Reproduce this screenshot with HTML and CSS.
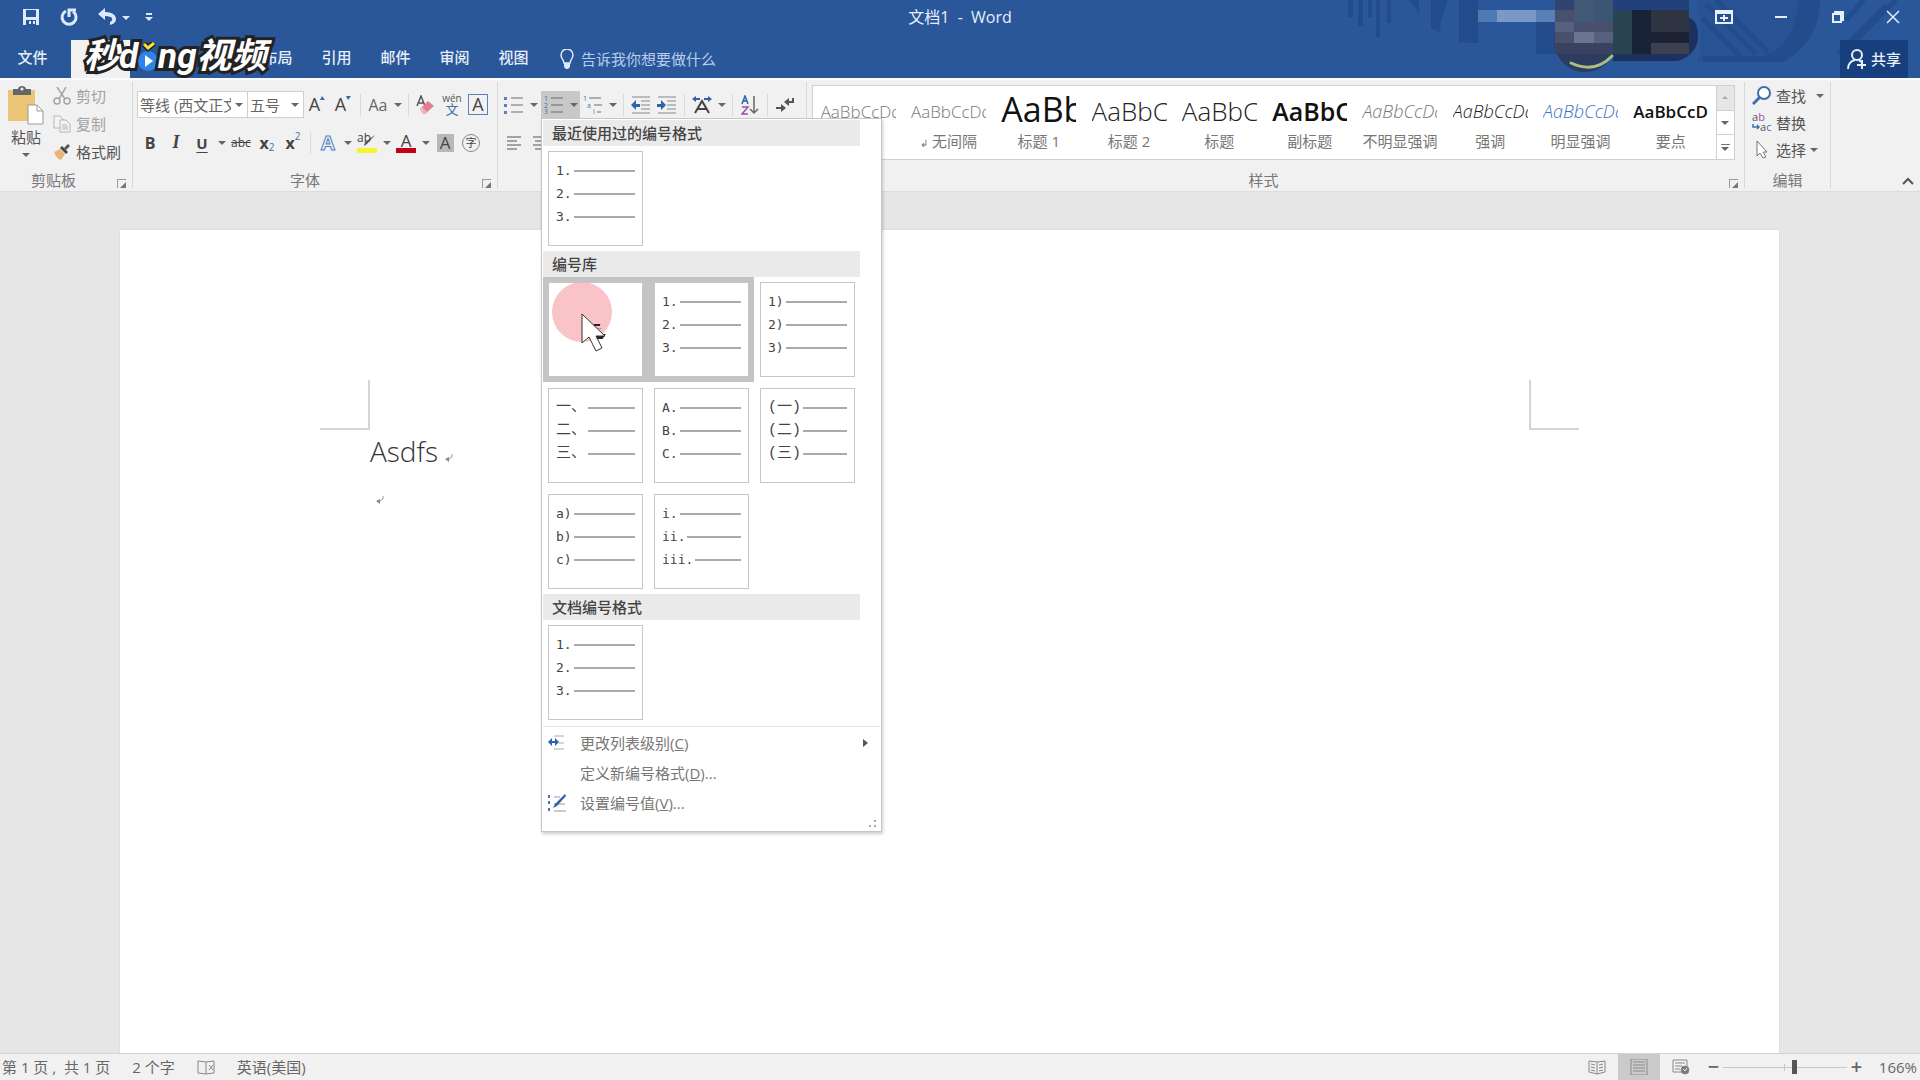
FILE: index.html
```html
<!doctype html>
<html lang="zh-CN">
<head>
	<meta charset="UTF-8">
	<meta name="viewport" content="width=device-width">
	<title>文档1 - Word</title>
	<link rel="stylesheet" href="styles.css">
</head>
<body>

<header class="header">
	<svg class="decor" width="580" height="78" viewBox="0 0 580 78" aria-hidden="true">
		<g fill="#234c8c">
			<path d="M8 0h5v17H8zM18 0h5v26h-5zM28 0h4v17h-4zM36 0h4v37h-4zM47 0h4v23h-4zM69 0h10v14zM91 0h17l-7 22 -1 11 -9 -5zM119 0h19v43h-19zM196 22h19v32h-19z"/>
			<path d="M358 62C362 35 362 20 356 0h120c0 30-12 50-34 62z" opacity=".35"/>
			<path d="M458 0h22c0 30-15 50-37 62h-80v-6h60c22-6 35-28 35-56z"/>
			<path d="M362 18l38 38M366 4l50 50M376 0l52 52" stroke="#234c8c" stroke-width="5"/>
			<path d="M512 44L556 0M498 54L546 6M506 20L524 0" stroke="#234c8c" stroke-width="5"/>
		</g>
		<path d="M138 10h19v12h-19z" fill="#5078b3"/>
		<path d="M157 10h39v12h-39z" fill="#7c98c6"/>
		<path d="M196 10h19v12h-19z" fill="#5a80b8"/>
		<path d="M273 18h77q8 4 8 18 0 18-20 25h-65z" fill="#1d315f"/>
		<circle cx="245" cy="41" r="31" fill="#2c3c5e"/>
		<path d="M215 0h58v54h-58z" fill="#48506e"/>
		<path d="M215 0h19v10h-19z" fill="#30446f"/>
		<path d="M234 0h20v22h-20z" fill="#425a78"/>
		<path d="M254 0h19v22h-19z" fill="#3a5672"/>
		<path d="M215 22h19v10h-19zM254 32h19v11h-19z" fill="#57607e"/>
		<path d="M234 32h20v11h-20z" fill="#6b7591"/>
		<path d="M215 43h58v11h-58z" fill="#3a4262"/>
		<path d="M273 0h76v10h-76z" fill="#21407c"/>
		<path d="M273 10h19v44h-19z" fill="#2a4350"/>
		<path d="M292 10h19v44h-19z" fill="#192338"/>
		<path d="M311 10h38v22h-38z" fill="#2f3443"/>
		<path d="M311 32h38v11h-38z" fill="#1c2233"/>
		<path d="M311 43h38v11h-38z" fill="#3b414e"/>
		<path d="M231 63q24 11 41-7" fill="none" stroke="#a9bf83" stroke-width="3" stroke-linecap="round"/>
	</svg>

	<div class="titlebar">
		<div class="quick">
			<button class="wbtn" aria-label="保存"><svg width="18" height="18" viewBox="0 0 18 18"><path d="M1 1h16v16H1z" fill="#dcebfb"/><path d="M4 2h10v7H4zM4 12h10v5H4z" fill="#2a579a"/><path d="M7 13h2v3H7zM11 13h2v3h-2z" fill="#dcebfb"/></svg></button>
			<button class="wbtn" aria-label="重复"><svg width="20" height="20" viewBox="0 0 20 20" fill="none" stroke="#dcebfb" stroke-width="3"><path d="M7 4a7 7 0 1 0 7 0.500"/><path d="M10 10V3h7" stroke-width="3"/></svg></button>
			<button class="wbtn" aria-label="撤消"><svg width="20" height="18" viewBox="0 0 20 18"><path d="M8 0v4c7 0 11 3 11 7 0 3-2 5-6 6v-3c4-2 3-6-5-6v4L1 6z" fill="#dcebfb"/></svg></button>
			<button class="wcaret" aria-label="撤消列表"><span class="caret"></span></button>
			<button class="wcaret custom" aria-label="自定义快速访问工具栏"><i></i><span class="caret"></span></button>
		</div>
		<div class="doc-title">文档1&nbsp; -&nbsp; Word</div>
		<div class="window-btns">
			<button aria-label="功能区显示选项"><svg width="18" height="14" viewBox="0 0 18 14"><path d="M1 1h16v12H1z" fill="none" stroke="#e6effa" stroke-width="2"/><path d="M1 3h16M9 5v6M5 8h8" stroke="#e6effa" stroke-width="2"/></svg></button>
			<button aria-label="最小化"><svg width="14" height="14" viewBox="0 0 14 14"><path d="M1 7h12" stroke="#e6effa" stroke-width="2"/></svg></button>
			<button aria-label="还原"><svg width="14" height="14" viewBox="0 0 14 14" fill="none" stroke="#e6effa" stroke-width="2"><path d="M2 4h8v8H2zM4 3V2h8v8h-1"/></svg></button>
			<button aria-label="关闭"><svg width="14" height="14" viewBox="0 0 14 14"><path d="M1 1l12 12M13 1L1 13" stroke="#e6effa" stroke-width="1.500"/></svg></button>
		</div>
	</div>

	<nav class="tabs">
		<a href="#" class="tab file">文件</a>
		<a href="#" class="tab active" aria-label="开始"></a>
		<a href="#" class="tab" aria-label="插入"></a>
		<a href="#" class="tab" aria-label="设计"></a>
		<a href="#" class="tab">布局</a>
		<a href="#" class="tab">引用</a>
		<a href="#" class="tab">邮件</a>
		<a href="#" class="tab">审阅</a>
		<a href="#" class="tab">视图</a>
		<button class="tell">
			<svg width="14" height="20" viewBox="0 0 14 20"><path d="M4 14c0-3-3-4-3-8a6 6 0 0 1 12 0c0 4-3 5-3 8z" fill="none" stroke="#dcebfb" stroke-width="1.500"/><path d="M4 14h6v4l-2 2H6l-2-2z" fill="#dcebfb"/></svg>
			告诉我你想要做什么
		</button>
		<button class="share">
			<svg width="20" height="22" viewBox="0 0 20 22" fill="none" stroke="#e6effa" stroke-width="2"><circle cx="10" cy="7" r="5"/><path d="M1 21c0-5 3-8 7-9M12 12l2 2M10 17h9M15 12v9"/></svg>
			共享
		</button>
	</nav>

	<div class="watermark">
		<span>秒d</span>
		<svg width="20" height="30" viewBox="0 0 20 30"><circle cx="10" cy="19" r="10" fill="#2e84ea"/><path d="M7 13l8 6-8 6z" fill="#fff"/><path d="M6 2l4 4 6-5" fill="none" stroke="#222" stroke-width="6"/><path d="M6 2l4 4 6-5" fill="none" stroke="#f6e336" stroke-width="3"/></svg>
		<span>ng视频</span>
	</div>
</header>

<div class="ribbon">
	<section class="group clipboard">
		<div class="clip-body">
			<button class="paste">
				<svg width="36" height="39" viewBox="0 0 36 39"><path d="M0 4h27v31H0z" fill="#ecc577"/><path d="M5 3h5c0-4 8-4 8 0h5v6H5z" fill="#666"/><circle cx="14" cy="3" r="1.500" fill="#f1f1f1"/><path d="M20 19h9l6 6v13H20z" fill="#fff" stroke="#999"/><path d="M29 19v6h6" fill="none" stroke="#999"/></svg>
				粘贴
				<span class="caret"></span>
			</button>
			<div class="clip-list">
				<button class="text-btn off"><svg width="18" height="18" viewBox="0 0 18 18" fill="none" stroke="#a5a5a5" stroke-width="1.500"><path d="M4 0l8 12M13 0L6 12"/><circle cx="4" cy="14" r="3"/><circle cx="14" cy="14" r="3"/></svg>剪切</button>
				<button class="text-btn off"><svg width="18" height="18" viewBox="0 0 18 18" fill="#f4f4f4" stroke="#b5b5b5"><path d="M1 1h6l3 3v9H1z"/><path d="M7 5h6l4 4v8H7zM9 10h5M9 12h6M9 14h6"/></svg>复制</button>
				<button class="text-btn"><svg width="18" height="18" viewBox="0 0 18 18"><path d="M1 9l6-3 5 5-4 6C5 16 2 13 1 9z" fill="#eab676"/><path d="M7 5l2-2 6 6-2 2z" fill="#444"/><path d="M11 5l4-4 2 2-4 4z" fill="#555"/></svg>格式刷</button>
			</div>
		</div>
		<div class="label">剪贴板<button class="launcher" aria-label="剪贴板设置"></button></div>
	</section>

	<section class="group font">
		<div class="row">
			<label class="combo name"><select aria-label="字体"><option>等线 (西文正文)</option></select></label>
			<label class="combo size"><select aria-label="字号"><option>五号</option></select></label>
			<button class="ib grow" aria-label="增大字号">A<svg width="5" height="4" viewBox="0 0 5 4"><path d="M0 4l2-4 3 4z" fill="#3b66a5"/></svg></button>
			<button class="ib grow" aria-label="减小字号">A<svg width="5" height="4" viewBox="0 0 5 4"><path d="M0 0h5L2 4z" fill="#3b66a5"/></svg></button>
			<i class="sep"></i>
			<button class="ib aa">Aa</button><button class="cb" aria-label="更改大小写"><span class="caret"></span></button>
			<i class="sep"></i>
			<button class="ib" aria-label="清除格式"><svg width="20" height="20" viewBox="0 0 20 20"><path d="M1 11l4-10 4 10M2 8h6" fill="none" stroke="#555" stroke-width="1.500"/><path d="M4 14l8-8 6 5-9 8H7z" fill="#e27d93"/><path d="M4 14l2-2 5 5-2 2H7z" fill="#f0b5c2"/></svg></button>
			<button class="ib pinyin" aria-label="拼音指南"><small>wén</small><span>文</span></button>
			<button class="ib" aria-label="字符边框"><span class="boxed">A</span></button>
		</div>
		<div class="row">
			<button class="ib bold">B</button>
			<button class="ib ital">I</button>
			<button class="ib under">U</button><button class="cb" aria-label="下划线样式"><span class="caret"></span></button>
			<button class="ib strike">abc</button>
			<button class="ib bold">x<sub>2</sub></button>
			<button class="ib bold">x<sup>2</sup></button>
			<i class="sep"></i>
			<button class="ib effect">A</button><button class="cb" aria-label="文本效果"><span class="caret"></span></button>
			<button class="ib" aria-label="突出显示颜色"><svg width="20" height="20" viewBox="0 0 20 20"><text x="0" y="9" font-size="12" fill="#444">ab</text><path d="M18 2l-8 9-3 2 1-4z" fill="#555"/><path d="M0 15h20v5H0z" fill="#f4f52a"/></svg></button><button class="cb" aria-label="颜色列表"><span class="caret"></span></button>
			<button class="ib fcolor">A</button><button class="cb" aria-label="字体颜色列表"><span class="caret"></span></button>
			<button class="ib" aria-label="字符底纹"><span class="shade">A</span></button>
			<button class="ib" aria-label="带圈字符"><span class="circled">字</span></button>
		</div>
		<div class="label">字体<button class="launcher" aria-label="字体设置"></button></div>
	</section>

	<section class="group para">
		<div class="row">
			<button class="ib" aria-label="项目符号"><svg width="20" height="18" viewBox="0 0 20 18"><path d="M0 1h3v3H0zM0 8h3v3H0zM0 15h3v3H0z" fill="#5b82b8"/><path d="M7 2h12M7 9h12M7 16h12" stroke="#999" stroke-width="1.500"/></svg></button><button class="cb" aria-label="项目符号列表"><span class="caret"></span></button>
			<div class="numbering">
				<button class="ib" aria-label="编号"><svg width="20" height="18" viewBox="0 0 20 18"><g font-size="7" fill="#4472ad"><text y="5">1</text><text y="12">2</text><text y="18">3</text></g><path d="M7 2h12M7 9h12M7 16h12" stroke="#888" stroke-width="1.500"/></svg></button><button class="cb" aria-label="编号列表"><span class="caret"></span></button>

				<div class="menu">
					<h2>最近使用过的编号格式</h2>
					<div class="cells">
						<button class="cell"><span class="card"><span>1.</span><span>2.</span><span>3.</span></span></button>
					</div>
					<h2>编号库</h2>
					<div class="cells">
						<button class="cell on"><span class="card none">无</span></button>
						<button class="cell on"><span class="card"><span>1.</span><span>2.</span><span>3.</span></span></button>
						<button class="cell"><span class="card"><span>1)</span><span>2)</span><span>3)</span></span></button>
						<button class="cell"><span class="card cjk"><span>一、</span><span>二、</span><span>三、</span></span></button>
						<button class="cell"><span class="card"><span>A.</span><span>B.</span><span>C.</span></span></button>
						<button class="cell"><span class="card cjk"><span>(一)</span><span>(二)</span><span>(三)</span></span></button>
						<button class="cell"><span class="card"><span>a)</span><span>b)</span><span>c)</span></span></button>
						<button class="cell"><span class="card"><span>i.</span><span>ii.</span><span>iii.</span></span></button>
					</div>
					<h2>文档编号格式</h2>
					<div class="cells">
						<button class="cell"><span class="card"><span>1.</span><span>2.</span><span>3.</span></span></button>
					</div>
					<div class="actions">
						<button><svg width="18" height="16" viewBox="0 0 18 16"><path d="M6 1h10M11 8h5M6 14h10" stroke="#aaa"/><path d="M0 7l4-4v3h3V3l4 4-4 4V8H4v3z" fill="#2f62a8"/></svg>更改列表级别(<u>C</u>)<i class="more"></i></button>
						<button><svg width="18" height="16"></svg>定义新编号格式(<u>D</u>)...</button>
						<button><svg width="18" height="18" viewBox="0 0 18 18"><path d="M0 1h2v3H0zM0 7h2v3H0zM0 14h2v3H0z" fill="#4472ad"/><path d="M6 3h6M6 10h11M6 17h12" stroke="#999"/><path d="M17 0l1 2L9 12l-4 2 2-4z" fill="#2f62a8"/></svg>设置编号值(<u>V</u>)...</button>
					</div>
					<svg class="grip" width="9" height="8" viewBox="0 0 9 8"><path d="M6 0h2v2H6zM6 5h2v2H6zM1 5h2v2H1z" fill="#aaa"/></svg>
					<svg class="pointer" width="62" height="74" viewBox="0 0 62 74"><circle cx="30" cy="30" r="30" fill="#f6a9b0" opacity=".7"/><path d="M42 43h6M43 53h9l-2 3h-7z" stroke="#222" stroke-width="2" fill="#222"/><path d="M30 32v29l7-6 7 14 6-3-6-12h9z" fill="#fff" stroke="#333"/></svg>
				</div>
			</div>
			<button class="ib" aria-label="多级列表"><svg width="20" height="18" viewBox="0 0 20 18"><g font-size="7" fill="#4472ad"><text y="5">1</text><text x="4" y="12">a</text><text x="10" y="18">i</text></g><path d="M6 2h12M11 9h8M14 16h4" stroke="#999" stroke-width="1.500"/></svg></button><button class="cb" aria-label="多级列表选项"><span class="caret"></span></button>
			<i class="sep"></i>
			<button class="ib" aria-label="减少缩进量"><svg width="20" height="18" viewBox="0 0 20 18"><path d="M1 1h18M10 5h9M10 9h9M10 13h9M1 17h18" stroke="#aaa" stroke-width="1.500"/><path d="M0 9l5-5v4h4v3H5v3z" fill="#2f62a8"/></svg></button>
			<button class="ib" aria-label="增加缩进量"><svg width="20" height="18" viewBox="0 0 20 18"><path d="M1 1h18M10 5h9M10 9h9M10 13h9M1 17h18" stroke="#aaa" stroke-width="1.500"/><path d="M9 9L4 4v4H0v3h4v3z" fill="#2f62a8"/></svg></button>
			<i class="sep"></i>
			<button class="ib" aria-label="中文版式"><svg width="20" height="18" viewBox="0 0 20 18"><path d="M3 17L10 5l7 12M6 13h8" fill="none" stroke="#444" stroke-width="2"/><path d="M0 3l4-3v2h4v2H4v2zM20 3l-4-3v2h-4v2h4v2z" fill="#2f62a8"/></svg></button><button class="cb" aria-label="中文版式选项"><span class="caret"></span></button>
			<i class="sep"></i>
			<button class="ib" aria-label="排序"><svg width="18" height="20" viewBox="0 0 18 20" fill="none" stroke-width="1.500"><path d="M1 9l3-8 3 8M2 6h4" stroke="#2f62a8"/><path d="M1 12h6l-6 7h6" stroke="#9a4fb0"/><path d="M13 1v17M9 14l4 4 4-4" stroke="#666"/></svg></button>
			<i class="sep"></i>
			<button class="ib" aria-label="显示编辑标记"><svg width="18" height="16" viewBox="0 0 18 16"><path d="M17 1v4h-5" fill="none" stroke="#555" stroke-width="2"/><path d="M13 1v8L8 5zM5 7v8l5-4z" fill="#555"/><path d="M0 11h6" stroke="#555" stroke-width="2"/></svg></button>
		</div>
		<div class="row">
			<button class="ib" aria-label="左对齐"><svg width="14" height="14" viewBox="0 0 14 14"><path d="M0 1h14M0 5h10M0 9h14M0 13h10" stroke="#888" stroke-width="1.500"/></svg></button>
			<button class="ib" aria-label="居中"><svg width="14" height="14" viewBox="0 0 14 14"><path d="M0 1h14M2 5h10M0 9h14M2 13h10" stroke="#888" stroke-width="1.500"/></svg></button>
		</div>
	</section>

	<section class="group styles">
		<div class="gallery">
			<button class="style"><b>AaBbCcDd</b></button>
			<button class="style"><b>AaBbCcDd</b><span><small>↲</small> 无间隔</span></button>
			<button class="style h1"><b>AaBb</b><span>标题 1</span></button>
			<button class="style h2"><b>AaBbC</b><span>标题 2</span></button>
			<button class="style h2"><b>AaBbC</b><span>标题</span></button>
			<button class="style h2 strong"><b>AaBbC</b><span>副标题</span></button>
			<button class="style it"><b>AaBbCcDd</b><span>不明显强调</span></button>
			<button class="style it dark"><b>AaBbCcDd</b><span>强调</span></button>
			<button class="style it blue"><b>AaBbCcDd</b><span>明显强调</span></button>
			<button class="style strong"><b>AaBbCcD</b><span>要点</span></button>
			<div class="scroller">
				<button aria-label="向上" disabled><span class="caret up"></span></button>
				<button aria-label="向下"><span class="caret"></span></button>
				<button aria-label="更多"><i></i><span class="caret"></span></button>
			</div>
		</div>
		<div class="label">样式<button class="launcher" aria-label="样式设置"></button></div>
	</section>

	<section class="group edit">
		<div class="edit-list">
			<button class="text-btn"><svg width="20" height="19" viewBox="0 0 20 19" fill="none" stroke="#3f6fae"><circle cx="12" cy="7" r="6" stroke-width="2" fill="#fff"/><path d="M8 11l-7 7" stroke-width="3"/></svg>查找<span class="caret wide"></span></button>
			<button class="text-btn"><svg width="20" height="19" viewBox="0 0 20 19"><text x="0" y="8" font-size="11" fill="#555">a<tspan fill="#9a4fb0">b</tspan></text><text x="8" y="18" font-size="11" fill="#555">a<tspan fill="#3f6fae">c</tspan></text><path d="M1 11v3h6M5 12l2 2-2 2" fill="none" stroke="#3f6fae" stroke-width="1.500"/></svg>替换</button>
			<button class="text-btn"><svg width="20" height="19" viewBox="0 0 20 19"><path d="M5 1v15l3-3 3 5 3-1-3-5h4z" fill="#fff" stroke="#777"/></svg>选择<span class="caret"></span></button>
		</div>
		<div class="label">编辑</div>
	</section>

	<button class="collapse" aria-label="折叠功能区"><svg width="12" height="8" viewBox="0 0 12 8"><path d="M1 7l5-5 5 5" fill="none" stroke="#555" stroke-width="2"/></svg></button>
</div>

<main class="workspace">
	<article class="page">
		<div class="marks"><i class="mark left"></i><i class="mark right"></i></div>
		<p>Asdfs <svg width="8" height="8" viewBox="0 0 8 8"><path d="M7 0v3L3 6" fill="none" stroke="#999"/><path d="M0 5l4-2v5z" fill="#888"/></svg></p>
		<p class="empty"><svg width="8" height="8" viewBox="0 0 8 8"><path d="M7 0v3L3 6" fill="none" stroke="#999"/><path d="M0 5l4-2v5z" fill="#888"/></svg></p>
	</article>
</main>

<footer class="status">
	<span>第 1 页 ,&nbsp; 共 1 页</span>
	<span>2 个字</span>
	<svg width="18" height="15" viewBox="0 0 18 15" fill="none" stroke="#888"><path d="M9 2v12M9 2L1 1v12l8 1M9 2l8-1v12l-8 1M12 5l4 5M16 5l-4 5"/></svg>
	<span>英语(美国)</span>
	<div class="views">
		<button aria-label="阅读视图"><svg width="18" height="15" viewBox="0 0 18 15" fill="none" stroke="#888"><path d="M9 2v12M9 2L1 1v11l8 2 8-2V1zM3 4l4 1M3 7l4 1M3 10l4 1M15 4l-4 1M15 7l-4 1M15 10l-4 1"/></svg></button>
		<button class="on" aria-label="页面视图"><svg width="18" height="16" viewBox="0 0 18 16" fill="none" stroke="#8c8c8c"><path d="M1 0h16v16H1zM3 3h12M3 6h12M3 9h12M3 12h12"/></svg></button>
		<button aria-label="Web 版式视图"><svg width="18" height="16" viewBox="0 0 18 16" fill="none" stroke="#888"><path d="M1 1h14v6M1 1v12h8M3 4h10M3 7h7M3 10h5"/><circle cx="13" cy="11" r="4" fill="#777"/><path d="M11 10l2 2 2-3" stroke="#eee"/></svg></button>
	</div>
	<div class="zoom-box">
		<button aria-label="缩小">−</button>
		<input class="zoom" type="range" min="10" max="280" value="166" aria-label="显示比例">
		<button aria-label="放大">+</button>
	</div>
	<span class="percent">166%</span>
</footer>

</body>
</html>
```
FILE: styles.css
```css
* {
	box-sizing: border-box;
}
body {
	margin: 0;
	min-height: 100vh;
	display: flex;
	flex-direction: column;
	background: #e6e6e6;
	color: #555;
	font: 15px/20px "Open Sans", "Noto Sans CJK SC", sans-serif;
}
button {
	margin: 0;
	padding: 0;
	border: 0;
	background: none;
	color: inherit;
	font: inherit;
}
svg {
	flex: none;
}

/* header */
.header {
	position: relative;
	background: #2a579a;
	color: #e6effa;
	height: 78px;
}
.decor {
	position: absolute;
	right: 0;
	top: 0;
}
.titlebar {
	position: relative;
	display: grid;
	grid-template-columns: 1fr auto 1fr;
	height: 40px;
	padding-bottom: 7px;
	align-items: center;
}
.quick {
	display: flex;
	align-items: center;
	padding-left: 12px;
}
.wbtn {
	display: flex;
	justify-content: center;
	width: 38px;
}
.wbtn + .wcaret {
	margin-left: -4px;
}
.wcaret {
	width: 8px;
	margin-right: 15px;
}
.wcaret .caret {
	border-top-color: #dcebfb;
}
.custom i {
	display: block;
	width: 6px;
	height: 2px;
	margin: 0 1px 2px;
	background: #dcebfb;
}
.custom .caret {
	display: block;
}
.doc-title {
	font-size: 16px;
	line-height: 20px;
}
.window-btns {
	display: flex;
	justify-content: flex-end;
}
.window-btns button {
	width: 57px;
	line-height: 0;
}
.window-btns button:last-child {
	width: 54px;
}
.caret {
	display: inline-block;
	width: 0;
	border: 4px solid transparent;
	border-top-color: #666;
	border-bottom: 0;
	vertical-align: middle;
}
.caret.up {
	border: 3px solid transparent;
	border-bottom-color: #aaa;
	border-top: 0;
}
.tabs {
	position: relative;
	display: flex;
	height: 38px;
}
.tab {
	width: 59px;
	color: inherit;
	font-size: 15px;
	font-weight: 500;
	line-height: 35px;
	text-align: center;
	text-decoration: none;
}
.tab.file {
	width: 71px;
	padding-right: 6px;
}
.tab.active {
	background: #f1f1f1;
}
.tell {
	display: flex;
	align-items: center;
	gap: 7px;
	margin-left: 17px;
	color: #b9cdea;
}
.share {
	display: flex;
	align-items: center;
	justify-content: center;
	gap: 4px;
	width: 68px;
	margin: 0 12px 0 auto;
	background: #173f7d;
	font-weight: 500;
}
.watermark {
	position: absolute;
	z-index: 5;
	left: 84px;
	top: 35px;
	display: flex;
	align-items: center;
	color: #fff;
	font: italic bold 35px/44px Roboto, "Noto Sans CJK SC", sans-serif;
	-webkit-text-stroke: 6px #222;
	paint-order: stroke fill;
}

/* ribbon */
.ribbon {
	position: relative;
	z-index: 2;
	display: flex;
	height: 114px;
	background: #f1f1f1;
	border-top: 2px solid #f9fbfe;
	border-bottom: 1px solid #dcdcdc;
}
.group {
	position: relative;
	flex: none;
	display: flex;
	flex-direction: column;
	gap: 11px;
	margin: 2px 0 3px;
	padding-top: 9px;
	border-right: 1px solid #d8d8d8;
}
.label {
	position: relative;
	margin-top: auto;
	line-height: 16px;
	text-align: center;
	color: #777;
}
.launcher {
	position: absolute;
	right: 6px;
	bottom: 0;
	width: 9px;
	height: 9px;
	border: 1px solid #999;
	border-width: 1px 0 0 1px;
}
.launcher::after {
	content: "";
	position: absolute;
	right: 0;
	bottom: 0;
	border: 3px solid #777;
	border-left-color: transparent;
	border-top-color: transparent;
}
.row {
	display: flex;
	align-items: center;
	height: 27px;
}
.ib {
	display: flex;
	align-items: center;
	justify-content: center;
	width: 26px;
	height: 27px;
	color: #444;
}
.cb {
	width: 13px;
	height: 27px;
	line-height: 0;
}
.sep {
	width: 1px;
	height: 22px;
	margin: 0 4px;
	background: #dadada;
}
.clipboard {
	width: 133px;
	padding: 0;
	gap: 0;
}
.clipboard .label {
	padding-right: 25px;
}
.clip-body {
	display: flex;
	gap: 9px;
	padding-left: 8px;
}
.paste {
	display: flex;
	flex-direction: column;
	align-items: center;
	width: 36px;
	padding-top: 4px;
	line-height: 24px;
}
.paste .caret {
	margin-top: 4px;
}
.clip-list {
	display: flex;
	flex-direction: column;
}
.text-btn {
	display: flex;
	align-items: center;
	gap: 5px;
	height: 28px;
	color: #555;
}
.text-btn.off {
	color: #a2a2a2;
}
.font {
	width: 365px;
	padding-left: 4px;
}
.font .label {
	padding-right: 24px;
}
.combo {
	position: relative;
	height: 27px;
	border: 1px solid #d0d0d0;
	background: #fff;
}
.combo.name {
	width: 111px;
}
.combo.size {
	width: 56px;
	border-left: 0;
}
.combo select {
	appearance: none;
	width: 100%;
	height: 25px;
	padding: 0 16px 0 2px;
	border: 0;
	background: none;
	color: #666;
	font: inherit;
}
.combo::after {
	content: "";
	position: absolute;
	right: 4px;
	top: 11px;
	border: 4px solid transparent;
	border-top-color: #666;
	border-bottom: 0;
}
.grow {
	align-items: flex-start;
	font-size: 18px;
	line-height: 26px;
}
.grow svg {
	margin-top: 5px;
}
.aa {
	font-size: 16px;
	color: #666;
}
.pinyin {
	flex-direction: column;
	font-size: 13px;
	line-height: 13px;
	color: #3f6fae;
}
.pinyin small {
	font-size: 10px;
	line-height: 9px;
	color: #555;
}
.boxed {
	width: 20px;
	border: 1px solid #5b82b8;
	font-size: 18px;
	line-height: 19px;
}
.bold {
	font-weight: bold;
	font-size: 16px;
}
.bold sub,
.bold sup {
	font-size: 10px;
	font-weight: normal;
	color: #3f6fae;
	line-height: 10px;
}
.bold sub {
	align-self: flex-end;
	padding-bottom: 4px;
}
.bold sup {
	align-self: flex-start;
	padding-top: 2px;
}
.ital {
	font: italic bold 18px "Liberation Serif", serif;
}
.under {
	font-weight: bold;
	text-decoration: underline;
	text-underline-offset: 3px;
}
.strike {
	font-size: 12px;
	text-decoration: line-through;
}
.effect {
	color: #f1f1f1;
	font-size: 20px;
	font-weight: bold;
	-webkit-text-stroke: 1px #4a7fc4;
}
.fcolor {
	height: 20px;
	width: 20px;
	margin: 0 3px;
	border-bottom: 5px solid #c40018;
	font-size: 17px;
	line-height: 15px;
}
.shade {
	width: 17px;
	background: #b8b8b8;
	font-size: 17px;
	line-height: 18px;
}
.circled {
	width: 18px;
	border: 1px solid #888;
	border-radius: 50%;
	font-size: 11px;
	line-height: 16px;
}
.para {
	width: 309px;
	padding-left: 3px;
}
.numbering {
	position: relative;
	display: flex;
	margin-left: 1px;
	background: #c8c8c8;
}
.styles {
	flex: 1;
	min-width: 0;
	padding: 3px 9px 0 5px;
}
.gallery {
	display: flex;
	height: 75px;
	border: 1px solid #d0d0d0;
	background: #fff;
}
.style {
	flex: 1 1 0;
	min-width: 0;
	display: flex;
	flex-direction: column;
	align-items: center;
	color: #777;
	line-height: 18px;
}
.style small {
	font-size: 10px;
}
.style b {
	width: 75px;
	height: 46px;
	overflow: hidden;
	font-size: 17px;
	font-weight: 300;
	line-height: 51px;
	text-align: left;
	white-space: nowrap;
}
.h1 b {
	color: #111;
	font-size: 34px;
	font-weight: 400;
	line-height: 46px;
}
.h2 b {
	color: #222;
	font-size: 26px;
	line-height: 50px;
}
.style.strong b {
	color: #111;
	font-weight: 600;
}
.h2.strong b {
	font-size: 25px;
}
.it b {
	font-style: italic;
	font-size: 18px;
}
.dark b {
	color: #222;
}
.blue b {
	color: #4472c4;
}
.scroller {
	flex: none;
	width: 18px;
	display: flex;
	flex-direction: column;
	border-left: 1px solid #d0d0d0;
}
.scroller button {
	flex: 1;
	display: flex;
	flex-direction: column;
	align-items: center;
	justify-content: center;
	gap: 2px;
}
.scroller button + button {
	border-top: 1px solid #d0d0d0;
}
.scroller button:disabled {
	background: #e6e6e6;
}
.scroller i {
	width: 9px;
	height: 1px;
	background: #777;
}
.styles .label {
	padding-right: 20px;
}
.styles .launcher {
	right: -3px;
}
.edit {
	width: 86px;
	padding: 0;
	gap: 0;
}
.edit-list {
	padding: 0 0 0 7px;
}
.edit-list .text-btn {
	height: 27px;
	gap: 4px;
}
.caret.wide {
	margin-left: 6px;
}
.collapse {
	width: 89px;
	padding: 0 6px 6px 0;
	align-self: flex-end;
	text-align: right;
	line-height: 0;
}

/* numbering menu */
.menu {
	position: absolute;
	z-index: 10;
	left: 0;
	top: 100%;
	width: 341px;
	padding: 1px 1px 13px;
	border: 1px solid #c6c6c6;
	background: #fff;
	box-shadow: 1px 2px 3px rgba(0, 0, 0, .2);
}
.menu h2 {
	width: 317px;
	margin: 0;
	padding-left: 9px;
	background: #eaeaea;
	color: #444;
	font-size: 15px;
	font-weight: 500;
	line-height: 26px;
}
.cells {
	display: grid;
	grid-template-columns: repeat(3, 105px);
	gap: 1px;
}
.cell {
	height: 105px;
	padding: 5px;
}
.cell.on {
	background: #c4c4c4;
}
.cell.on + .cell.on {
	box-shadow: -1px 0 #c4c4c4;
}
.card {
	display: flex;
	flex-direction: column;
	height: 95px;
	padding: 7px;
	border: 1px solid #c6c6c6;
	background: #fff;
	color: #444;
	font: 13px/23px "DejaVu Sans Mono", "Noto Sans CJK SC", monospace;
}
.card.cjk {
	font-family: "Liberation Mono", "Noto Sans CJK SC", monospace;
	font-size: 15px;
}
.card.none {
	align-items: center;
	justify-content: center;
}
.card span {
	display: flex;
	align-items: center;
	gap: 2px;
}
.card span::after {
	content: "";
	flex: 1;
	height: 2px;
	background: #aaa;
}
.actions {
	margin-top: 1px;
	padding-top: 1px;
	border-top: 1px solid #e4e4e4;
}
.actions button {
	display: flex;
	align-items: center;
	width: 100%;
	height: 30px;
	padding: 0 12px 0 5px;
	color: #777;
}
.actions svg {
	margin-right: 14px;
}
.more {
	margin-left: auto;
	border: 4px solid transparent;
	border-left: 5px solid #555;
	border-right: 0;
}
.grip {
	position: absolute;
	right: 4px;
	bottom: 3px;
}
.pointer {
	position: absolute;
	left: 10px;
	top: 163px;
}

/* document */
.workspace {
	flex: 1;
	display: flex;
	padding: 38px 141px 0 120px;
}
.page {
	flex: 1;
	padding: 150px 200px 0;
	background: #fff;
	box-shadow: 0 0 1px #bbb;
}
.marks {
	display: flex;
	justify-content: space-between;
}
.mark {
	width: 50px;
	height: 50px;
	border-bottom: 2px solid #d4d4d4;
}
.mark.left {
	border-right: 2px solid #d4d4d4;
}
.mark.right {
	border-left: 2px solid #d4d4d4;
}
.page p {
	margin: 0;
	padding-left: 50px;
	color: #333;
	font-size: 28px;
	font-weight: 300;
	line-height: 42px;
}
.page .empty {
	padding-left: 56px;
}

/* status bar */
.status {
	display: flex;
	align-items: center;
	height: 27px;
	padding: 0 3px 0 2px;
	gap: 22px;
	border-top: 1px solid #d2d2d2;
	background: #f1f1f1;
	color: #666;
}
.views {
	display: flex;
	align-self: stretch;
	margin-left: auto;
}
.views button {
	width: 42px;
	line-height: 0;
}
.views .on {
	background: #cacaca;
}
.zoom-box {
	display: flex;
	align-items: center;
	gap: 3px;
	margin: 0 -6px 0 -17px;
}
.zoom-box button {
	width: 13px;
	font-size: 20px;
	font-weight: 600;
}
.zoom {
	appearance: none;
	width: 124px;
	height: 16px;
	margin: 0;
	background:
		linear-gradient(#c8c8c8, #c8c8c8) center / 1px 7px no-repeat,
		linear-gradient(#c8c8c8, #c8c8c8) center / 100% 1px no-repeat;
}
.zoom::-webkit-slider-thumb {
	appearance: none;
	width: 5px;
	height: 14px;
	background: #555;
}
```
